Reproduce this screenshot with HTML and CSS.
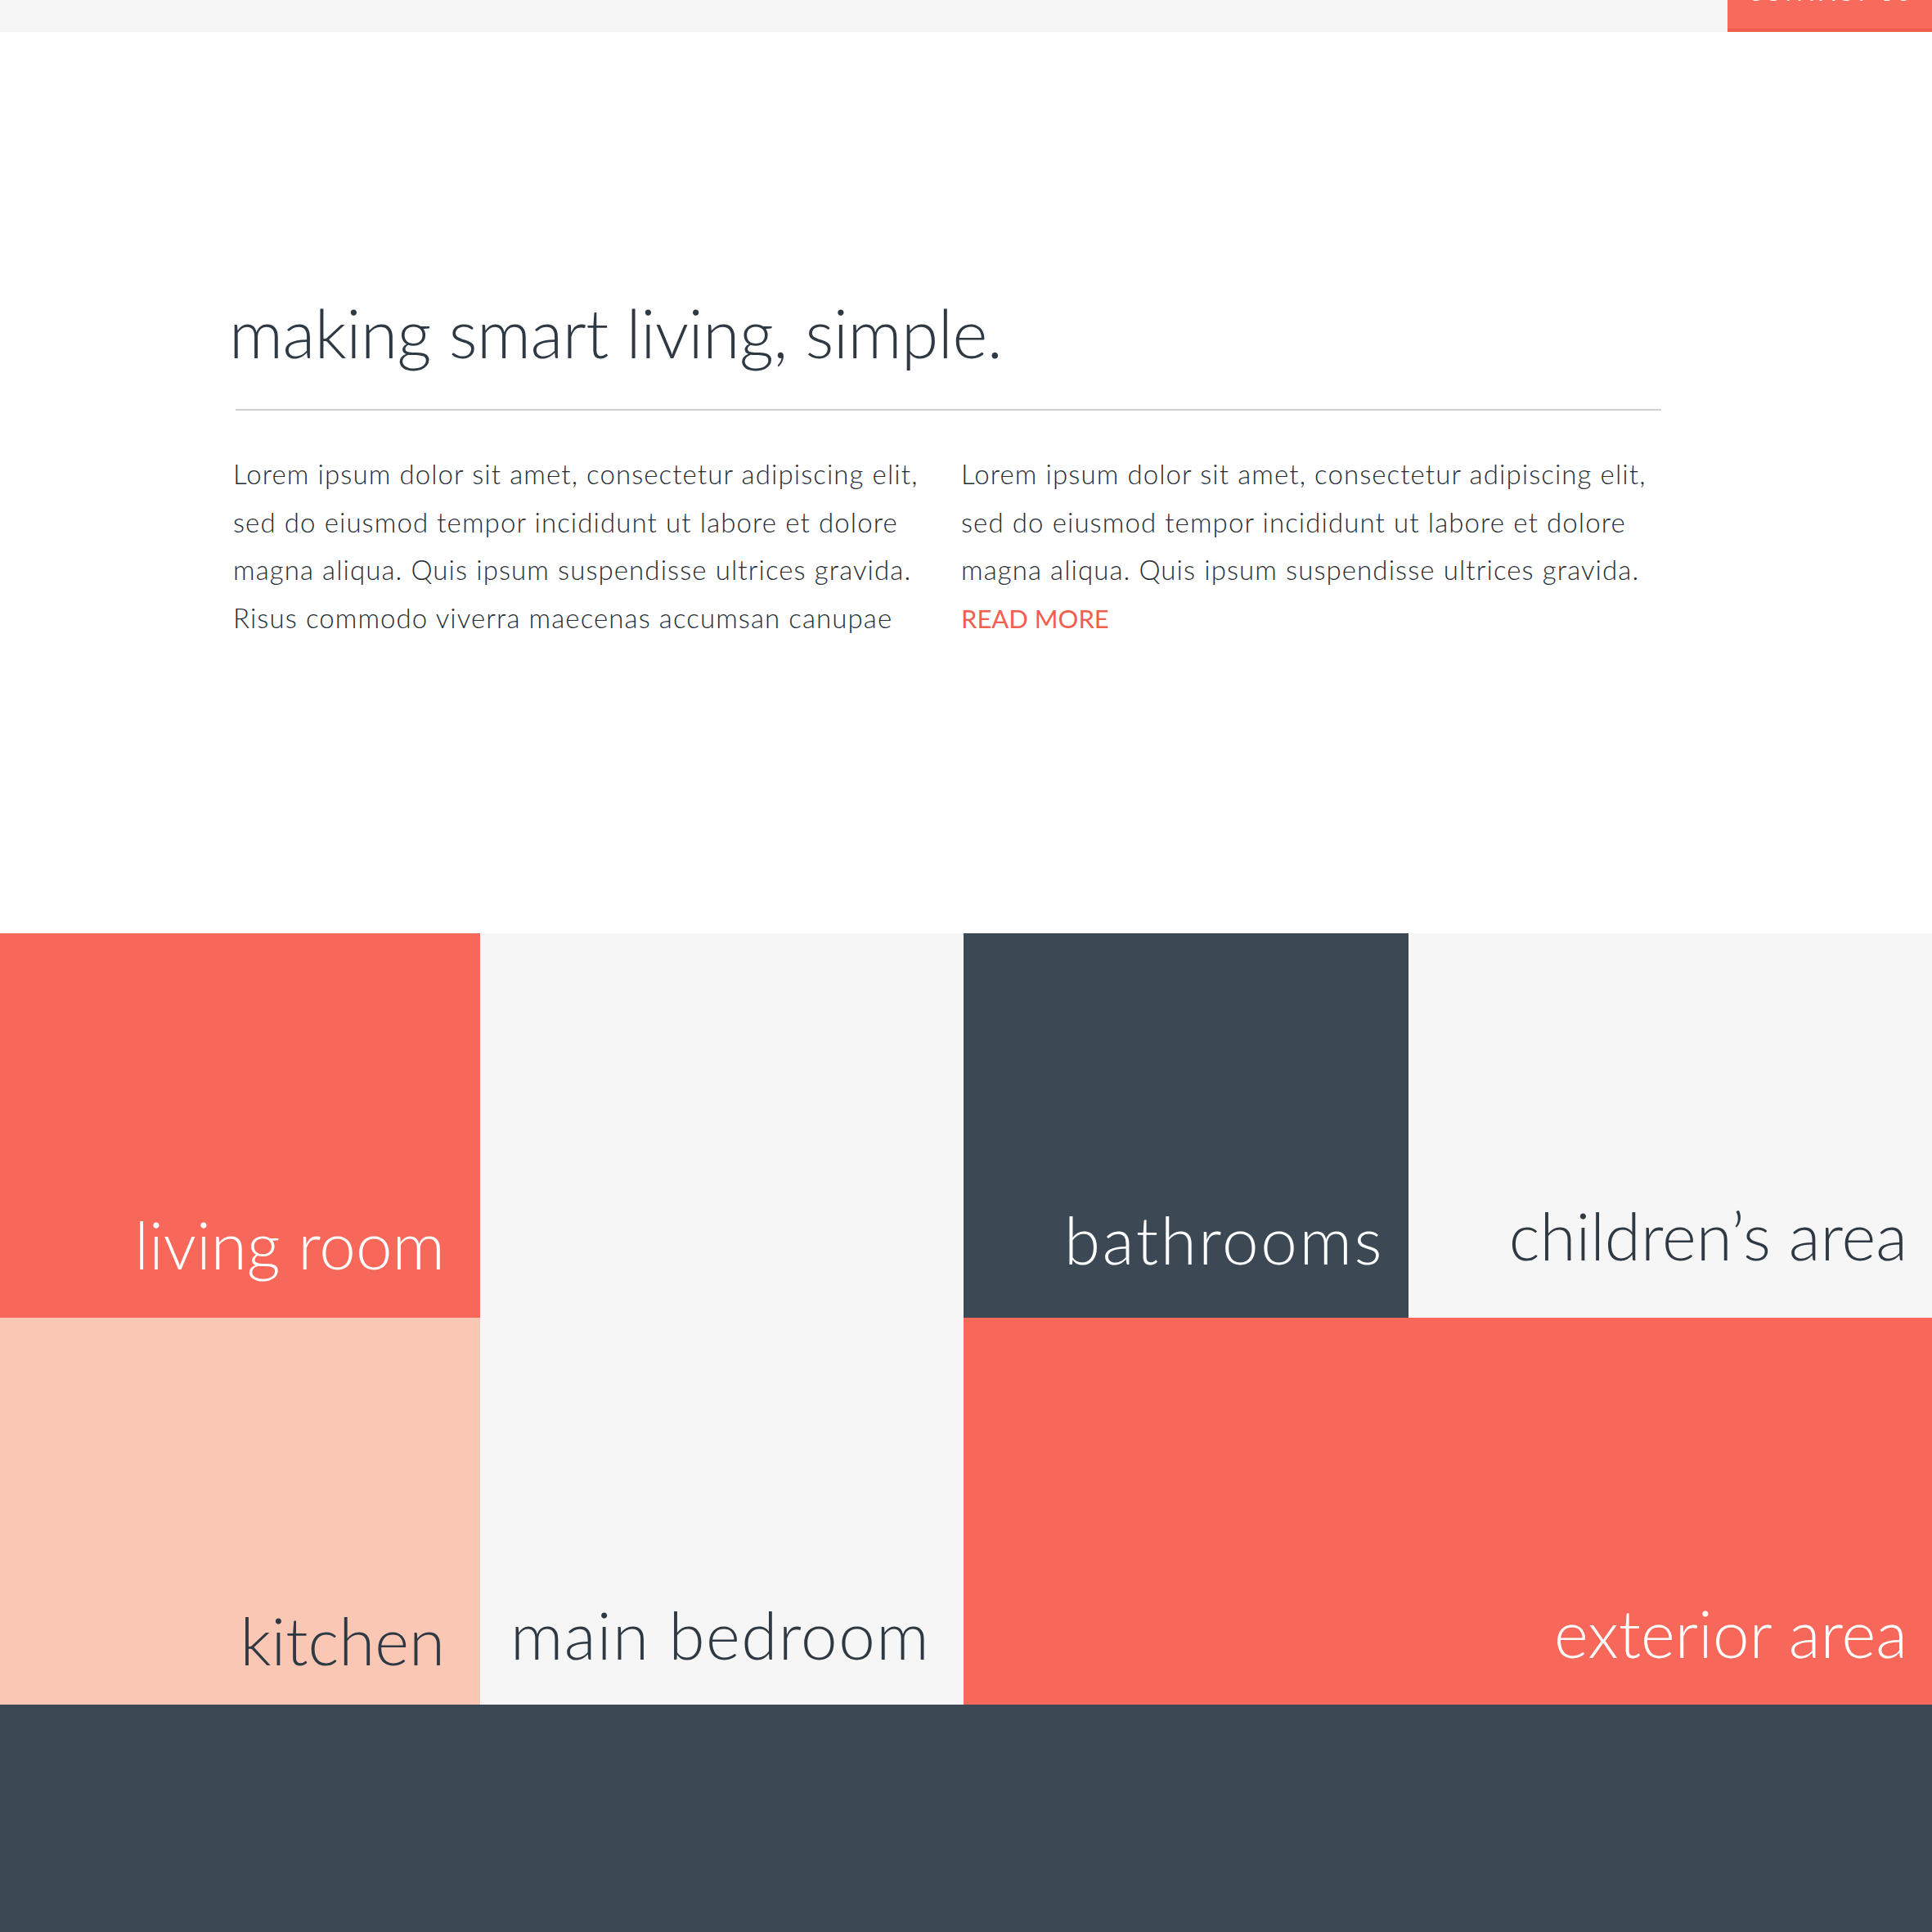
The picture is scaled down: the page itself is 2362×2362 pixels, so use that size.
FILE: index.html
```html
<!DOCTYPE html>
<html lang="en">
<head>
<meta charset="utf-8">
<title>making smart living, simple.</title>
<link rel="stylesheet" href="styles.css">
</head>
<body>
<header class="topbar">
  <a class="topbar-btn" href="#"><span class="topbar-btn-text">CONTACT US</span></a>
</header>

<section class="intro">
  <h1 class="intro-title">making smart living, simple.</h1>
  <hr class="intro-rule">
  <div class="intro-cols">
    <p class="intro-text">Lorem ipsum dolor sit amet, consectetur adipiscing elit, sed do eiusmod tempor incididunt ut labore et dolore magna aliqua. Quis ipsum suspendisse ultrices gravida. Risus commodo viverra maecenas accumsan canupae</p>
    <p class="intro-text">Lorem ipsum dolor sit amet, consectetur adipiscing elit, sed do eiusmod tempor incididunt ut labore et dolore magna aliqua. Quis ipsum suspendisse ultrices gravida.<br><a class="read-more" href="#">READ MORE</a></p>
  </div>
</section>

<section class="rooms">
  <a class="tile tile-living coral" href="#"><span class="tile-label light">living room</span></a>
  <a class="tile tile-bedroom gray" href="#"><span class="tile-label">main bedroom</span></a>
  <a class="tile tile-bath slate" href="#"><span class="tile-label light">bathrooms</span></a>
  <a class="tile tile-children gray" href="#"><span class="tile-label">children’s area</span></a>
  <a class="tile tile-kitchen peach" href="#"><span class="tile-label">kitchen</span></a>
  <a class="tile tile-exterior coral" href="#"><span class="tile-label light">exterior area</span></a>
</section>

<footer class="footer"></footer>
</body>
</html>
```

FILE: styles.css
```css
* { box-sizing: border-box; }

html, body {
  margin: 0;
  padding: 0;
  background: #ffffff;
  font-family: Lato, "Open Sans", "Liberation Sans", sans-serif;
  color: #333d48;
}

a { text-decoration: none; }

.topbar {
  height: 39px;
  background: #f6f6f6;
  display: flex;
  justify-content: flex-end;
}

.topbar-btn {
  width: 250px;
  height: 39px;
  background: #f86a5b;
  border-bottom: 4px solid #ef5d4f;
  overflow: hidden;
  display: flex;
  justify-content: center;
  align-items: flex-start;
}

.topbar-btn-text {
  color: #ffffff;
  font-size: 28px;
  letter-spacing: 3px;
  line-height: 28px;
  margin-top: -24px;
}

.intro {
  padding: 325px 331px 0 285px;
}

.intro-title {
  margin: 0 0 0 -5px;
  font-weight: 300;
  font-size: 82px;
  line-height: 84px;
  color: #2e3944;
  letter-spacing: -0.5px;
}

.intro-rule {
  margin: 52px 0 0 3px;
  border: 0;
  height: 2px;
  background: #cfcfcf;
}

.intro-cols {
  display: grid;
  grid-template-columns: 1fr 1fr;
  column-gap: 34px;
  margin-top: 48px;
}

.intro-text {
  margin: 0;
  font-weight: 300;
  font-size: 33px;
  line-height: 58.7px;
  letter-spacing: 1.1px;
  color: #262d35;
}

.read-more {
  font-weight: 400;
  font-size: 31px;
  letter-spacing: 0;
  color: #f0604f;
}

.rooms {
  margin-top: 355px;
  display: grid;
  grid-template-columns: 587fr 591fr 544fr 640fr;
  grid-template-rows: 470px 473px;
}

.tile {
  display: flex;
  justify-content: flex-end;
  align-items: flex-end;
}

.coral { background: #f8685a; }
.peach { background: #fbc7b5; }
.gray { background: #f6f6f6; }
.slate { background: #3c4854; }

.tile-living { grid-column: 1; grid-row: 1; padding: 0 43px 50px 0; }
.tile-bedroom { grid-column: 2; grid-row: 1 / span 2; padding: 0 41px 46px 0; border-left: 1px solid #ffffff; }
.tile-bath { grid-column: 3; grid-row: 1; padding: 0 30px 56px 0; }
.tile-children { grid-column: 4; grid-row: 1; padding: 0 30px 61px 0; border-left: 2px solid #ffffff; }
.tile-kitchen { grid-column: 1; grid-row: 2; padding: 0 43px 39px 0; }
.tile-exterior { grid-column: 3 / span 2; grid-row: 2; padding: 0 30px 48px 0; }

.tile-label {
  font-weight: 300;
  font-size: 80px;
  line-height: 80px;
  color: #2e3944;
  white-space: nowrap;
}

.tile-bath .tile-label { letter-spacing: 2.6px; }
.tile-bedroom .tile-label { letter-spacing: 1.4px; }

.tile-label.light { color: #ffffff; }

.footer {
  height: 300px;
  background: #3c4854;
}
```
